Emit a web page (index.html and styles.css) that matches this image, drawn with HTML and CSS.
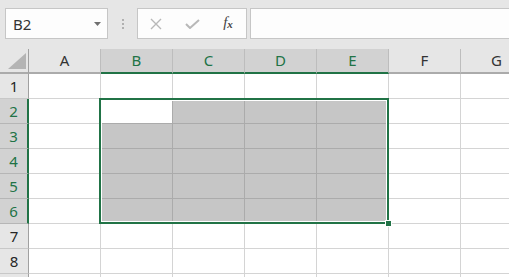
FILE: index.html
```html
<!DOCTYPE HTML>
<html lang="en">
<head>
	<title>sheet</title>
	<link rel="stylesheet" href="styles.css">
</head>
<body>
	<div class="bar">
		<div class="namebox">
			<span class="name">B2</span>
			<svg class="drop" width="7" height="4" viewBox="0 0 7 4"><polygon points="0,0 7,0 3.5,4" fill="#707070"/></svg>
		</div>
		<div class="grip"><i></i><i></i><i></i></div>
		<div class="fbtns">
			<span class="fbtn"><svg width="12" height="12" viewBox="0 0 12 12"><path d="M1 1L11 11M11 1L1 11" stroke="#b8b8b8" stroke-width="1.4" fill="none"/></svg></span>
			<span class="fbtn"><svg width="15" height="10" viewBox="0 0 15 10"><path d="M1 5L5 9L14 1" stroke="#b8b8b8" stroke-width="2" fill="none"/></svg></span>
			<span class="fbtn fx">f<span>x</span></span>
		</div>
		<div class="finput"></div>
	</div>

	<div class="sheet">
		<div class="row head">
			<div class="rh corner"><i></i></div>
			<div class="ch">A</div>
			<div class="ch on">B</div>
			<div class="ch on">C</div>
			<div class="ch on">D</div>
			<div class="ch on">E</div>
			<div class="ch">F</div>
			<div class="ch">G</div>
		</div>
		<div class="row">
			<div class="rh">1</div>
			<div class="c"></div><div class="c"></div><div class="c"></div><div class="c"></div><div class="c"></div><div class="c"></div><div class="c"></div>
		</div>
		<div class="row">
			<div class="rh on">2</div>
			<div class="c"></div><div class="c act"></div><div class="c on"></div><div class="c on"></div><div class="c on"></div><div class="c"></div><div class="c"></div>
		</div>
		<div class="row">
			<div class="rh on">3</div>
			<div class="c"></div><div class="c on"></div><div class="c on"></div><div class="c on"></div><div class="c on"></div><div class="c"></div><div class="c"></div>
		</div>
		<div class="row">
			<div class="rh on">4</div>
			<div class="c"></div><div class="c on"></div><div class="c on"></div><div class="c on"></div><div class="c on"></div><div class="c"></div><div class="c"></div>
		</div>
		<div class="row">
			<div class="rh on">5</div>
			<div class="c"></div><div class="c on"></div><div class="c on"></div><div class="c on"></div><div class="c on"></div><div class="c"></div><div class="c"></div>
		</div>
		<div class="row">
			<div class="rh on">6</div>
			<div class="c"></div><div class="c on"></div><div class="c on"></div><div class="c on"></div><div class="c on"></div><div class="c"></div><div class="c"></div>
		</div>
		<div class="row">
			<div class="rh">7</div>
			<div class="c"></div><div class="c"></div><div class="c"></div><div class="c"></div><div class="c"></div><div class="c"></div><div class="c"></div>
		</div>
		<div class="row">
			<div class="rh">8</div>
			<div class="c"></div><div class="c"></div><div class="c"></div><div class="c"></div><div class="c"></div><div class="c"></div><div class="c"></div>
		</div>
		<!-- row 9 is cut by the window edge, only its top shows -->
		<div class="row">
			<div class="rh"></div>
			<div class="c"></div><div class="c"></div><div class="c"></div><div class="c"></div><div class="c"></div><div class="c"></div><div class="c"></div>
		</div>

		<!-- selection range B2:E6 -->
		<div class="sel"></div>
		<div class="handle"></div>
	</div>
</body>
</html>
```

FILE: styles.css
```css
body {
	margin:0;
	width:509px;
	height:277px;
	overflow:hidden;
	background:#e6e6e6;
	font-family:"Noto Sans", "Liberation Sans", sans-serif;
	font-size:15px;
	color:#262626;
	}

/* Formula bar */
.bar {
	display:flex;
	align-items:center;
	height:49px;
	padding-left:5px;
	box-sizing:border-box;
	padding-bottom:2px;
	}
.namebox {
	display:flex;
	align-items:center;
	width:103px;
	height:31px;
	box-sizing:border-box;
	border:1px solid #c6c6c6;
	background:#fdfdfd;
	padding:0 6px 0 7px;
	}
	.namebox .name {
		flex:1;
		color:#333;
		}
	.namebox .drop {
		display:block;
		}
.grip {
	display:flex;
	flex-direction:column;
	align-items:center;
	gap:2px;
	width:29px;
	}
	.grip i {
		display:block;
		width:2px;
		height:2px;
		background:#b0b0b0;
		}
.fbtns {
	display:flex;
	width:110px;
	height:31px;
	box-sizing:border-box;
	border:1px solid #c6c6c6;
	background:#fdfdfd;
	}
	.fbtn {
		flex:1;
		display:flex;
		align-items:center;
		justify-content:center;
		}
	.fx {
		font-family:"Liberation Serif", serif;
		font-style:italic;
		font-size:15px;
		color:#444;
		padding-bottom:2px;
		}
		.fx span {
			font-size:11px;
			font-weight:bold;
			margin-top:3px;
			}
.finput {
	flex:1;
	height:31px;
	margin-left:3px;
	box-sizing:border-box;
	border:1px solid #c6c6c6;
	border-right:none;
	background:#fdfdfd;
	}

/* Sheet */
.sheet {
	position:relative;
	width:533px;
	}
.row {
	display:flex;
	height:25px;
	}
.rh {
	flex:0 0 29px;
	box-sizing:border-box;
	border-right:1px solid #a0a0a0;
	border-bottom:1px solid #c8c8c8;
	background:#e6e6e6;
	text-align:center;
	line-height:24px;
	}
	.rh.on {
		background:#d2d2d2;
		color:#217346;
		border-right:2px solid #217346;
		border-bottom-color:#b6b6b6;
		}
.c {
	flex:0 0 72px;
	box-sizing:border-box;
	border-right:1px solid #d4d4d4;
	border-bottom:1px solid #d4d4d4;
	background:#fff;
	}
	.c.on {
		background:#c6c6c6;
		border-color:#ababab;
		}
	.c.act {
		border-color:#ababab;
		}

/* Headers */
.head .ch,
.head .corner {
	border-bottom:2px solid #ababab;
	}
.ch {
	flex:0 0 72px;
	box-sizing:border-box;
	border-right:1px solid #bdbdbd;
	text-align:center;
	line-height:23px;
	color:#333;
	}
	.ch.on {
		background:#d2d2d2;
		color:#217346;
		border-bottom-color:#217346;
		}
.corner {
	position:relative;
	}
	.corner i {
		position:absolute;
		left:8px;
		top:4px;
		width:0;
		height:0;
		border-left:18px solid transparent;
		border-bottom:16px solid #b4b4b4;
		}

/* Selection */
.sel {
	position:absolute;
	left:99px;
	top:49px;
	width:290px;
	height:126px;
	box-sizing:border-box;
	border:2px solid #217346;
	box-shadow:inset 0 0 0 1px #fff;
	}
.handle {
	position:absolute;
	left:385px;
	top:171px;
	width:5px;
	height:5px;
	background:#217346;
	border:1px solid #fff;
	}
```
